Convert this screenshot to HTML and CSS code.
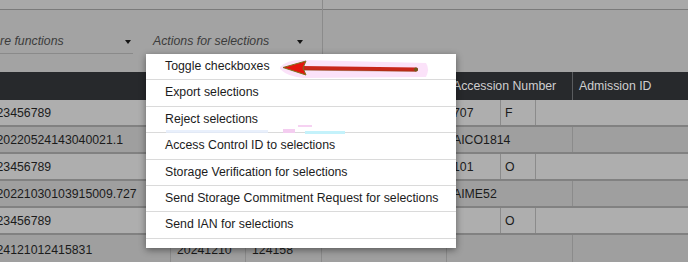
FILE: index.html
```html
<!DOCTYPE html>
<html>
<head>
<meta charset="utf-8">
<link rel="stylesheet" href="styles.css">
</head>
<body>
<div class="page">
  <div class="top">
    <div class="panel panel-left">
      <div class="strip"></div>
      <div class="toolbar">
        <div class="dd dd-more"><span class="dd-label">More functions</span><span class="caret"></span></div>
        <div class="dd dd-actions"><span class="dd-label">Actions for selections</span><span class="caret"></span></div>
      </div>
    </div>
    <div class="panel panel-right">
      <div class="strip"></div>
    </div>
  </div>

  <div class="grid">
    <div class="row head">
      <div class="cell c-wide"></div>
      <div class="cell c-acc">Accession Number</div>
      <div class="cell c-rest">Admission ID</div>
    </div>
    <div class="row odd">
      <div class="cell c-wide first"><span>23456789</span></div>
      <div class="cell c-b">707</div>
      <div class="cell c-c">F</div>
      <div class="cell c-rest"></div>
    </div>
    <div class="row even">
      <div class="cell c-wide first"><span>20220524143040021.1</span></div>
      <div class="cell c-acc">AICO1814</div>
      <div class="cell c-rest"></div>
    </div>
    <div class="row odd">
      <div class="cell c-wide first"><span>23456789</span></div>
      <div class="cell c-b">101</div>
      <div class="cell c-c">O</div>
      <div class="cell c-rest"></div>
    </div>
    <div class="row even">
      <div class="cell c-wide first"><span>20221030103915009.727</span></div>
      <div class="cell c-acc">AIME52</div>
      <div class="cell c-rest"></div>
    </div>
    <div class="row odd">
      <div class="cell c-wide first"><span>23456789</span></div>
      <div class="cell c-b"></div>
      <div class="cell c-c">O</div>
      <div class="cell c-rest"></div>
    </div>
    <div class="row even last">
      <div class="cell c-id first"><span>24121012415831</span></div>
      <div class="cell c-date">20241210</div>
      <div class="cell c-time">124158</div>
      <div class="cell c-mid"></div>
      <div class="cell c-acc"></div>
      <div class="cell c-rest"></div>
    </div>
  </div>

  <div class="menu">
    <div class="item">Toggle checkboxes</div>
    <div class="item">Export selections</div>
    <div class="item">Reject selections</div>
    <div class="item">Access Control ID to selections</div>
    <div class="item">Storage Verification for selections</div>
    <div class="item">Send Storage Commitment Request for selections</div>
    <div class="item">Send IAN for selections</div>
    <span class="artifact a-ghost"></span>
    <span class="artifact a-pink1"></span>
    <span class="artifact a-pink2"></span>
    <span class="artifact a-cyan"></span>
  </div>

  <svg class="arrow" width="152" height="24" viewBox="0 0 152 24">
    <path d="M2 10 Q10 2 26 3 L148 6 Q152 12 148 20 L26 21 Q10 20 2 12 Z" fill="#fbe2f9"/>
    <line x1="24" y1="11" x2="138" y2="12.5" stroke="#c8261a" stroke-width="4" stroke-linecap="round"/>
    <line x1="26" y1="13.2" x2="138" y2="14.2" stroke="#7a4a12" stroke-width="0.8" opacity="0.6"/>
    <circle cx="138" cy="12.6" r="2" fill="#6e5a1a"/>
    <path d="M5 10.5 L28 4 L25 11 L28 18 Z" fill="#e4140e" stroke="#7d7420" stroke-width="1" stroke-linejoin="round"/>
  </svg>
</div>
</body>
</html>
```

FILE: styles.css
```css
html, body {
  margin: 0;
  padding: 0;
}
body {
  font-family: "Liberation Sans", Arial, sans-serif;
  font-size: 12.3px;
  background: #a3a3a3;
}
.page {
  position: relative;
  width: 688px;
  height: 262px;
  overflow: hidden;
  background: #a3a3a3;
}

/* top area */
.top {
  display: flex;
  height: 72px;
}
.panel-left {
  width: 323px;
  box-sizing: border-box;
  border-right: 1px solid #8b8b8b;
}
.panel-right {
  flex: 1;
}
.strip {
  height: 9px;
  background: #a9a9a9;
  border-bottom: 1px solid #7b7b7b;
}
.toolbar {
  display: flex;
  padding-top: 23px;
}
.dd {
  display: flex;
  align-items: center;
  justify-content: space-between;
  box-sizing: border-box;
  height: 21px;
  padding-bottom: 4px;
  border-bottom: 1px solid #8a8a8a;
  font-style: italic;
  color: #3b3b3b;
  line-height: 16px;
  font-size: 12.3px;
}
.dd-more {
  margin-left: -18px;
  width: 151px;
  padding-left: 1px;
  padding-right: 2px;
}
.dd-actions {
  margin-left: 17px;
  width: 160px;
  padding-left: 3px;
  padding-right: 7px;
  border-bottom-color: transparent;
}
.caret {
  width: 0;
  height: 0;
  border-left: 3.5px solid transparent;
  border-right: 3.5px solid transparent;
  border-top: 4px solid #151515;
  margin-top: 1px;
}

/* grid */
.grid {
  display: flex;
  flex-direction: column;
}
.row {
  display: flex;
  height: 27px;
  box-sizing: border-box;
  border-bottom: 2px solid #818181;
  color: #1b1b1b;
}
.row.head {
  height: 28px;
  border-bottom: none;
  background: #27292c;
  color: #cfcfcf;
}
.row.odd {
  background: #aeaeae;
}
.row.even {
  background: #9f9f9f;
}
.row.last {
  border-bottom: none;
  height: 30px;
}
.cell {
  display: flex;
  align-items: center;
  box-sizing: border-box;
  flex: none;
  height: 100%;
  padding-left: 6px;
  border-left: 1px solid #8b8b8b;
  white-space: nowrap;
  overflow: hidden;
}
.head .cell {
  border-left-color: #5a5c5f;
}
.cell.first,
.head .c-wide {
  border-left: none;
  padding-left: 0;
}
.cell.first span {
  margin-left: -3.5px;
}
.c-wide { width: 446px; }
.c-acc { width: 126px; }
.c-b { width: 54px; }
.c-c { width: 35px; padding-left: 4px; }
.c-rest { flex: 1; }
.c-id { width: 170px; }
.c-date { width: 75px; }
.c-time { width: 76px; }
.c-mid { width: 125px; }

/* dropdown menu */
.menu {
  position: absolute;
  left: 146px;
  top: 54px;
  width: 310px;
  background: #ffffff;
  box-shadow: 0 2px 7px rgba(0, 0, 0, 0.45);
  padding-bottom: 9px;
  color: #1c1c1c;
}
.item {
  height: 25.4px;
  line-height: 25.4px;
  padding-left: 19px;
  border-bottom: 1px solid #dadada;
  white-space: nowrap;
}
.artifact {
  position: absolute;
  height: 3px;
}
.a-ghost {
  left: 20px;
  top: 76px;
  width: 102px;
  background: #e4ecfb;
  opacity: 0.8;
}
.a-pink1 {
  left: 137px;
  top: 75px;
  width: 12px;
  height: 4px;
  background: #f4cdf0;
}
.a-pink2 {
  left: 152px;
  top: 71px;
  width: 14px;
  height: 2px;
  background: #f6d2f2;
}
.a-cyan {
  left: 159px;
  top: 77px;
  width: 40px;
  background: #c4f2fb;
}

.arrow {
  position: absolute;
  left: 278px;
  top: 57px;
}
```
